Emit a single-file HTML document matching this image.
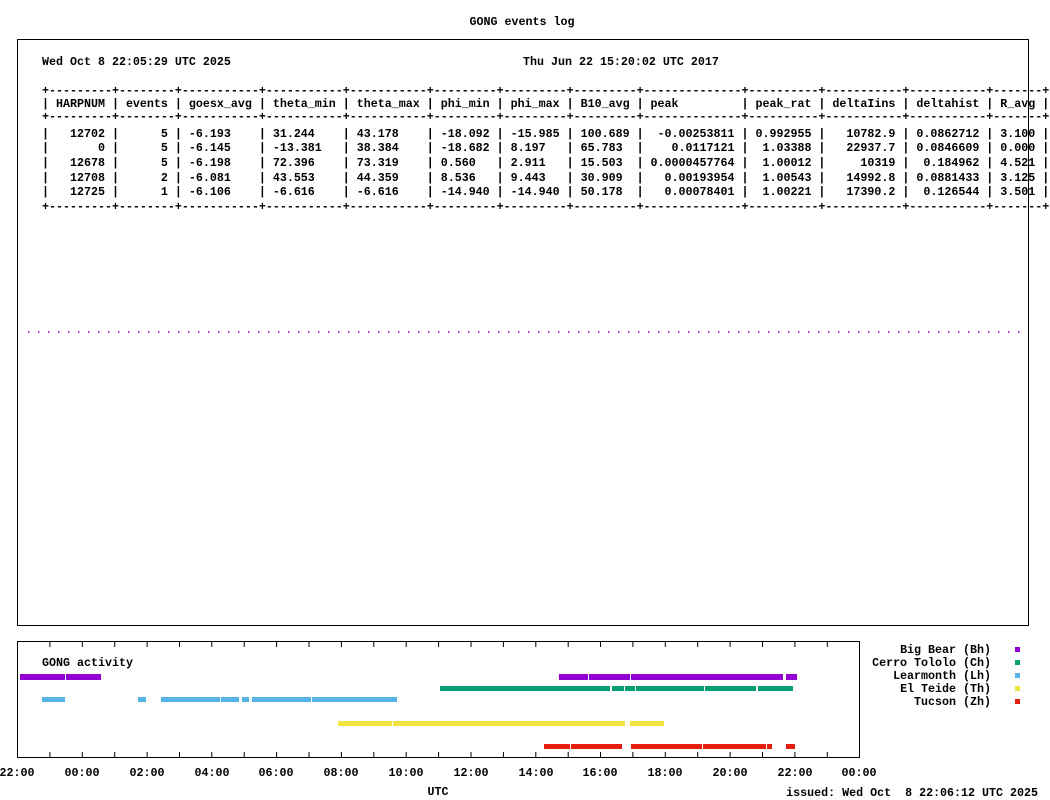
<!DOCTYPE html>
<html><head><meta charset="utf-8"><style>
html,body{margin:0;padding:0;background:#fff;width:1050px;height:800px;overflow:hidden}
svg text{font-family:"Liberation Mono","DejaVu Sans Mono",monospace;font-weight:bold;font-size:11.67px;fill:#000;white-space:pre}
</style></head><body>
<svg width="1050" height="800" xmlns="http://www.w3.org/2000/svg">
<text x="522" y="25" text-anchor="middle">GONG events log</text>
<rect x="17.5" y="39.5" width="1011" height="586" fill="none" stroke="#000" stroke-width="1"/>
<text x="42" y="65">Wed Oct 8 22:05:29 UTC 2025</text>
<text x="523" y="65">Thu Jun 22 15:20:02 UTC 2017</text>
<text x="42" y="94">+---------+--------+-----------+-----------+-----------+---------+---------+---------+--------------+----------+-----------+-----------+-------+</text>
<text x="42" y="107">| HARPNUM | events | goesx_avg | theta_min | theta_max | phi_min | phi_max | B10_avg | peak         | peak_rat | deltaIins | deltahist | R_avg |</text>
<text x="42" y="120">+---------+--------+-----------+-----------+-----------+---------+---------+---------+--------------+----------+-----------+-----------+-------+</text>
<text x="42" y="137">|   12702 |      5 | -6.193    | 31.244    | 43.178    | -18.092 | -15.985 | 100.689 |  -0.00253811 | 0.992955 |   10782.9 | 0.0862712 | 3.100 |</text>
<text x="42" y="151">|       0 |      5 | -6.145    | -13.381   | 38.384    | -18.682 | 8.197   | 65.783  |    0.0117121 |  1.03388 |   22937.7 | 0.0846609 | 0.000 |</text>
<text x="42" y="166">|   12678 |      5 | -6.198    | 72.396    | 73.319    | 0.560   | 2.911   | 15.503  | 0.0000457764 |  1.00012 |     10319 |  0.184962 | 4.521 |</text>
<text x="42" y="181">|   12708 |      2 | -6.081    | 43.553    | 44.359    | 8.536   | 9.443   | 30.909  |   0.00193954 |  1.00543 |   14992.8 | 0.0881433 | 3.125 |</text>
<text x="42" y="195">|   12725 |      1 | -6.106    | -6.616    | -6.616    | -14.940 | -14.940 | 50.178  |   0.00078401 |  1.00221 |   17390.2 |  0.126544 | 3.501 |</text>
<text x="42" y="210">+---------+--------+-----------+-----------+-----------+---------+---------+---------+--------------+----------+-----------+-----------+-------+</text>
<line x1="28" y1="332" x2="1022" y2="332" stroke="#9400d3" stroke-width="1.5" stroke-dasharray="1.5 8.5"/>

<rect x="17.5" y="641.5" width="842" height="116" fill="none" stroke="#000" stroke-width="1"/>
<text x="42" y="666">GONG activity</text>
<g fill="#9400d3"><rect x="20" y="674" width="45" height="6"/><rect x="66" y="674" width="35" height="6"/><rect x="559" y="674" width="29" height="6"/><rect x="589" y="674" width="41" height="6"/><rect x="631" y="674" width="152" height="6"/><rect x="786" y="674" width="11" height="6"/></g>
<g fill="#009e73"><rect x="440" y="686" width="170" height="5"/><rect x="612" y="686" width="12" height="5"/><rect x="625" y="686" width="10" height="5"/><rect x="636" y="686" width="68" height="5"/><rect x="705" y="686" width="51" height="5"/><rect x="758" y="686" width="35" height="5"/></g>
<g fill="#56b4e9"><rect x="42" y="697" width="23" height="5"/><rect x="138" y="697" width="8" height="5"/><rect x="161" y="697" width="59" height="5"/><rect x="221" y="697" width="18" height="5"/><rect x="242" y="697" width="7" height="5"/><rect x="252" y="697" width="59" height="5"/><rect x="312" y="697" width="85" height="5"/></g>
<g fill="#f0e442"><rect x="338" y="721" width="54" height="5"/><rect x="393" y="721" width="232" height="5"/><rect x="630" y="721" width="34" height="5"/></g>
<g fill="#e51e10"><rect x="544" y="744" width="26" height="5"/><rect x="571" y="744" width="51" height="5"/><rect x="631" y="744" width="71" height="5"/><rect x="703" y="744" width="63" height="5"/><rect x="767" y="744" width="5" height="5"/><rect x="786" y="744" width="9" height="5"/></g>

<g text-anchor="end">
<text x="991" y="653">Big Bear (Bh)</text>
<text x="991" y="666">Cerro Tololo (Ch)</text>
<text x="991" y="679">Learmonth (Lh)</text>
<text x="991" y="692">El Teide (Th)</text>
<text x="991" y="705">Tucson (Zh)</text>
</g>
<rect x="1015" y="647" width="5" height="5" fill="#9400d3"/>
<rect x="1015" y="660" width="5" height="5" fill="#009e73"/>
<rect x="1015" y="673" width="5" height="5" fill="#56b4e9"/>
<rect x="1015" y="686" width="5" height="5" fill="#f0e442"/>
<rect x="1015" y="699" width="5" height="5" fill="#e51e10"/>

<g text-anchor="middle">
<text x="17" y="776">22:00</text><text x="82" y="776">00:00</text><text x="147" y="776">02:00</text><text x="212" y="776">04:00</text><text x="276" y="776">06:00</text><text x="341" y="776">08:00</text><text x="406" y="776">10:00</text><text x="471" y="776">12:00</text><text x="536" y="776">14:00</text><text x="600" y="776">16:00</text><text x="665" y="776">18:00</text><text x="730" y="776">20:00</text><text x="795" y="776">22:00</text><text x="859" y="776">00:00</text>
<text x="438" y="795">UTC</text>
</g>
<text x="1038" y="796" text-anchor="end">issued: Wed Oct  8 22:06:12 UTC 2025</text>

<g stroke="#000" stroke-width="1">
<path d="M49.9 642v5M82.3 642v5M114.7 642v5M147.1 642v5M179.5 642v5M211.8 642v5M244.2 642v5M276.6 642v5M309 642v5M341.4 642v5M373.8 642v5M406.2 642v5M438.6 642v5M471 642v5M503.4 642v5M535.8 642v5M568.2 642v5M600.5 642v5M632.9 642v5M665.3 642v5M697.7 642v5M730.1 642v5M762.5 642v5M794.9 642v5M827.3 642v5"/>
<path d="M49.9 757v-5M82.3 757v-5M114.7 757v-5M147.1 757v-5M179.5 757v-5M211.8 757v-5M244.2 757v-5M276.6 757v-5M309 757v-5M341.4 757v-5M373.8 757v-5M406.2 757v-5M438.6 757v-5M471 757v-5M503.4 757v-5M535.8 757v-5M568.2 757v-5M600.5 757v-5M632.9 757v-5M665.3 757v-5M697.7 757v-5M730.1 757v-5M762.5 757v-5M794.9 757v-5M827.3 757v-5"/>
</g>
</svg>
</body></html>
